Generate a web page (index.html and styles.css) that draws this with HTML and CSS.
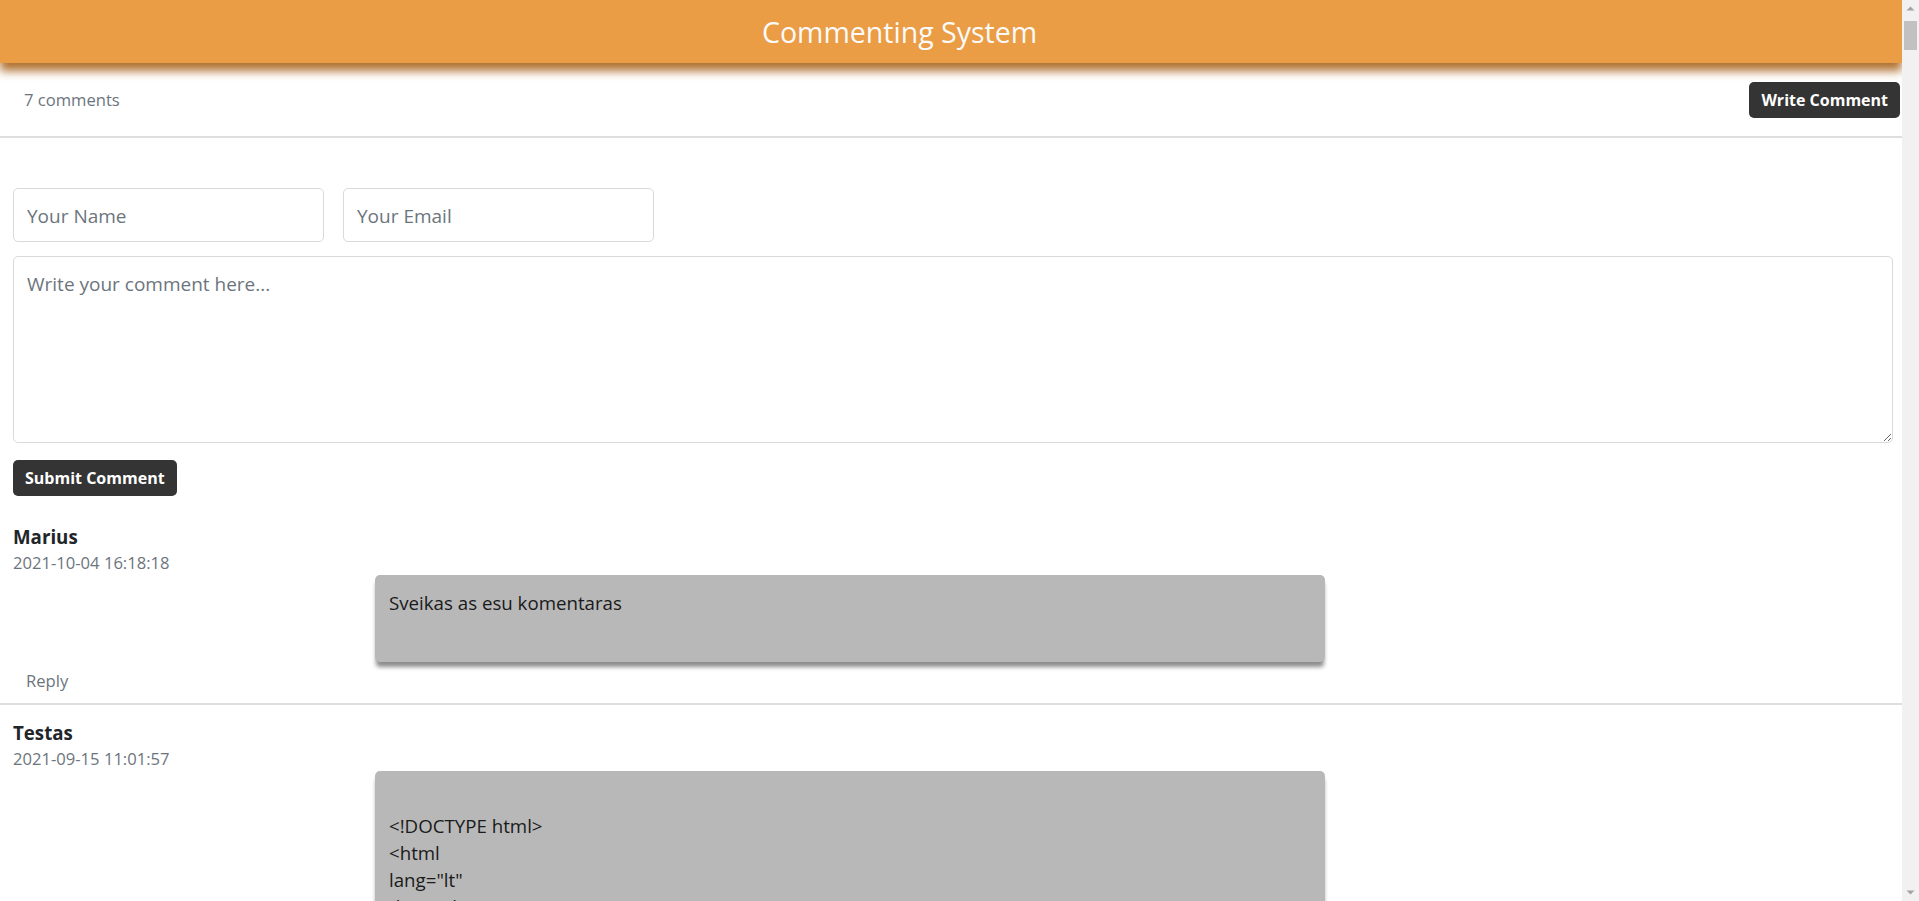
FILE: index.html
```html
<!DOCTYPE html>
<html lang="en">
<head>
<meta charset="utf-8">
<title>Commenting System</title>
<link rel="stylesheet" href="styles.css">
</head>
<body>
<header class="site-header">
  <h1 class="site-title">Commenting System</h1>
</header>
<main>
  <div class="toolbar">
    <span class="count">7 comments</span>
    <button class="btn" type="button">Write Comment</button>
  </div>
  <form class="comment-form">
    <div class="form-row">
      <input class="field" type="text" placeholder="Your Name">
      <input class="field" type="email" placeholder="Your Email">
    </div>
    <textarea class="field area" placeholder="Write your comment here..."></textarea>
    <div><button class="btn" type="button">Submit Comment</button></div>
  </form>
  <ul class="comments">
    <li class="comment">
      <div class="author">Marius</div>
      <div class="date">2021-10-04 16:18:18</div>
      <div class="bubble">Sveikas as esu komentaras

</div>
      <a class="reply" href="#">Reply</a>
    </li>
    <li class="comment">
      <div class="author">Testas</div>
      <div class="date">2021-09-15 11:01:57</div>
      <div class="bubble">
&lt;!DOCTYPE html&gt;
&lt;html
lang="lt"
dir="" class=""&gt;
&lt;head&gt;
&lt;meta charset="utf-8"&gt;
&lt;title&gt;Testas&lt;/title&gt;
&lt;/head&gt;
&lt;body&gt;
&lt;/body&gt;
&lt;/html&gt;
</div>
      <a class="reply" href="#">Reply</a>
    </li>
  </ul>
</main>
<div class="scrollbar" aria-hidden="true">
  <svg class="sb-btn" width="17" height="17" viewBox="0 0 17 17"><path d="M4.5 10.5 L8.5 6.5 L12.5 10.5 Z" fill="#a3a3a3"/></svg>
  <div class="sb-track"><div class="sb-thumb"></div></div>
  <svg class="sb-btn" width="17" height="17" viewBox="0 0 17 17"><path d="M4.5 6.5 L8.5 10.5 L12.5 6.5 Z" fill="#a3a3a3"/></svg>
</div>
</body>
</html>
```
FILE: styles.css
```css
html, body {
  margin: 0;
  padding: 0;
}
body {
  font-family: "Open Sans", "Noto Sans", sans-serif;
  color: #212529;
  background: #fff;
  margin-right: 17px;
}
.site-header {
  height: 63px;
  background: #ea9d44;
  display: flex;
  align-items: center;
  justify-content: center;
  padding-right: 103px;
  box-shadow: 0 8px 9px #b07232;
  position: relative;
  z-index: 1;
}
.site-title {
  margin: 0;
  font-size: 28.5px;
  font-weight: 400;
  color: #fafafa;
}
.toolbar {
  height: 75px;
  display: flex;
  align-items: center;
  justify-content: space-between;
  padding: 0 2px 0 24px;
  border-bottom: 2px solid #dedede;
  box-sizing: border-box;
}
.count {
  font-size: 16.6px;
  color: #6c757d;
}
.btn {
  font-family: inherit;
  font-size: 16px;
  font-weight: 700;
  color: #fff;
  background: #343434;
  border: 0;
  border-radius: 5px;
  height: 36px;
  padding: 0 12px;
  cursor: pointer;
}
.comment-form {
  padding: 50px 9px 0 13px;
  display: flex;
  flex-direction: column;
}
.form-row {
  display: flex;
  gap: 19px;
  margin-bottom: 14px;
}
.field {
  font-family: inherit;
  font-size: 19px;
  color: #212529;
  border: 1px solid #dadada;
  border-radius: 5px;
  padding: 2px 13px 0;
  box-sizing: border-box;
  background: #fff;
  outline: none;
}
.field::placeholder {
  color: #6c757d;
}
.form-row .field {
  width: 311px;
  height: 54px;
}
.area {
  width: 100%;
  height: 187px;
  padding-top: 14px;
  resize: vertical;
  margin-bottom: 17px;
  display: block;
}
.comments {
  list-style: none;
  margin: 26px 0 0;
  padding: 0;
}
.comment {
  padding: 0 13px 10px;
  border-bottom: 2px solid #dedede;
  margin-bottom: 13px;
}
.author {
  font-size: 18.7px;
  font-weight: 700;
  line-height: 29px;
}
.date {
  font-size: 16.6px;
  color: #6c757d;
  line-height: 24px;
}
.bubble {
  margin-left: 362px;
  width: 950px;
  box-sizing: border-box;
  background: #b8b8b8;
  border-radius: 5px;
  padding: 14px 14px 19px;
  font-size: 18.7px;
  line-height: 27px;
  color: #1a1a1a;
  white-space: pre-line;
  box-shadow: 0 6px 4px -1px rgba(0, 0, 0, 0.45);
}
.reply {
  display: inline-block;
  margin: 7px 0 0 13px;
  font-size: 16.6px;
  line-height: 24px;
  color: #6c757d;
  text-decoration: none;
}
.scrollbar {
  position: fixed;
  top: 0;
  right: 0;
  width: 17px;
  height: 100vh;
  background: #f1f1f1;
  display: flex;
  flex-direction: column;
  z-index: 5;
}
.sb-btn {
  display: block;
  flex: none;
}
.sb-track {
  flex: 1;
  padding: 4px 2px 0;
}
.sb-thumb {
  height: 29px;
  background: #c1c1c1;
}
```
